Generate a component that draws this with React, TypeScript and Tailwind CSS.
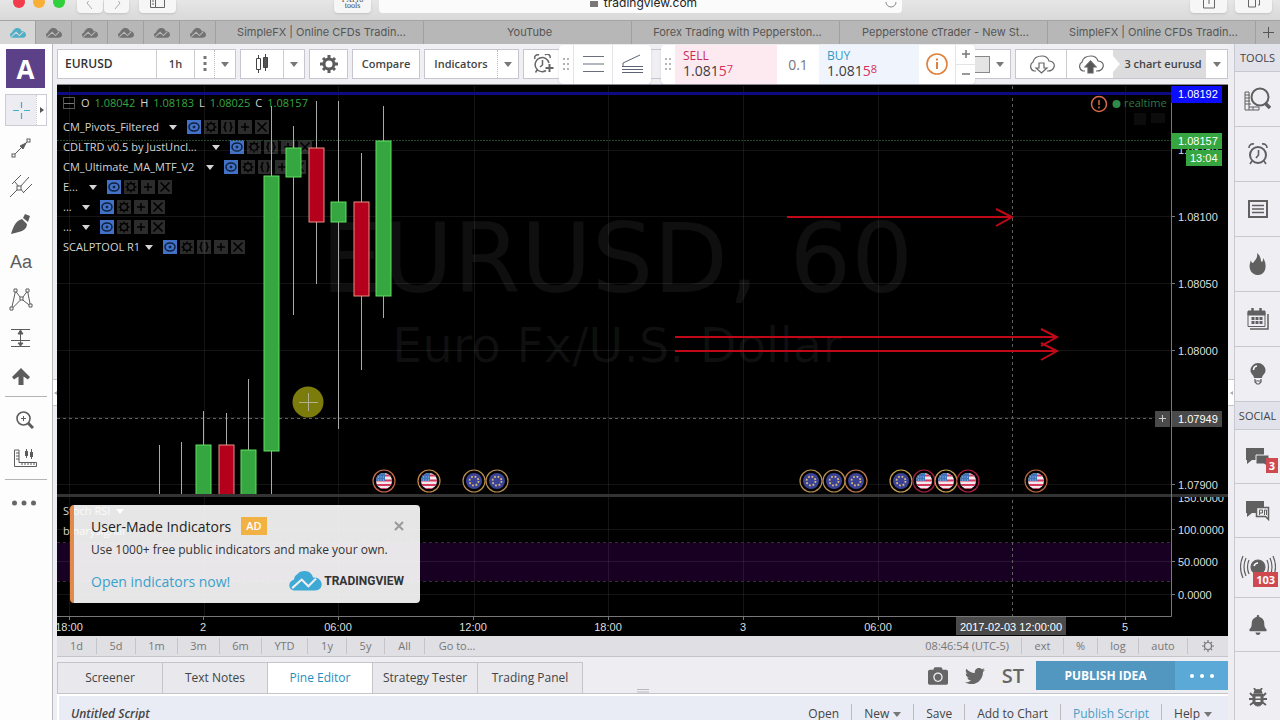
import type { ReactNode } from "react";
import { FaBell, FaCamera, FaTwitter } from "react-icons/fa";

const GREEN = "#36a640";
const RED = "#b4001c";

// cx, wick top, wick bottom, body top, body bottom, up
const candles: [number, number, number, number, number, boolean][] = [
  [203, 411, 495, 445, 495, true],
  [226, 413, 495, 445, 495, false],
  [248, 379, 495, 450, 495, true],
  [271, 106, 495, 176, 451, true],
  [293, 126, 315, 148, 177, true],
  [316, 101, 284, 148, 222, false],
  [338, 101, 429, 202, 222, true],
  [361, 153, 370, 202, 296, false],
  [383, 106, 318, 141, 296, true],
];

const events: [number, "us" | "eu", string][] = [
  [384, "us", "#d06a4a"],
  [429, "us", "#c98a4a"],
  [474, "eu", "#b58d4c"],
  [497, "eu", "#b58d4c"],
  [811, "eu", "#b58d4c"],
  [834, "eu", "#b58d4c"],
  [856, "eu", "#c07a4c"],
  [901, "eu", "#c9a050"],
  [924, "us", "#a52040"],
  [946, "us", "#c9a050"],
  [968, "us", "#b02040"],
  [1036, "us", "#b8683c"],
];

const priceLabels: [string, number][] = [
  ["1.08100", 217],
  ["1.08050", 284],
  ["1.08000", 351],
  ["1.07900", 485],
  ["100.0000", 530],
  ["50.0000", 562],
  ["0.0000", 595],
];

const timeLabels: [string, number][] = [
  ["18:00", 69],
  ["2", 203],
  ["06:00", 338],
  ["12:00", 473],
  ["18:00", 608],
  ["3", 743],
  ["06:00", 878],
  ["5", 1125],
];

const studies = [
  { name: "CM_Pivots_Filtered", width: "w-[103px]", source: true },
  { name: "CDLTRD v0.5 by JustUncl...", width: "w-[146px]", source: true },
  { name: "CM_Ultimate_MA_MTF_V2", width: "w-[140px]", source: true },
  { name: "E...", width: "w-[23px]", source: false },
  { name: "...", width: "w-[16px]", source: false },
  { name: "...", width: "w-[16px]", source: false },
  { name: "SCALPTOOL R1", width: "w-[79px]", source: true },
];

const ranges = [
  { label: "1d", width: "w-10" },
  { label: "5d", width: "w-[39px]" },
  { label: "1m", width: "w-[42px]" },
  { label: "3m", width: "w-[42px]" },
  { label: "6m", width: "w-[42px]" },
  { label: "YTD", width: "w-[46px]" },
  { label: "1y", width: "w-[39px]" },
  { label: "5y", width: "w-[38px]" },
  { label: "All", width: "w-10" },
];

function Caret({ className = "text-[#777]" }: { className?: string }) {
  return (
    <svg width="8" height="5" viewBox="0 0 8 5" className={`shrink-0 ${className}`}>
      <path d="M0 0h8L4 5z" fill="currentColor" />
    </svg>
  );
}

function CloudLogo({ className, line }: { className: string; line: string }) {
  return (
    <svg viewBox="0 0 34 21" className={className}>
      <path
        d="M6 20.500C2 20.500 0 18 0 15c0-3 2-5 5-6 0-3 2-5 4-6 1-2 4-3 7-3 5 0 8 3 9 7 5-1 9 3 9 7 0 4-3 6.500-7 6.500z"
        fill="currentColor"
      />
      <path d="M3 18l10-9 7 7 8-8" fill="none" stroke={line} strokeWidth="2.200" />
    </svg>
  );
}

/* ---------- browser chrome ---------- */

function ChromeButton({ className, label, children }: { className: string; label: string; children: ReactNode }) {
  return (
    <button
      aria-label={label}
      className={`flex h-[13px] shrink-0 items-end justify-center overflow-hidden rounded-b bg-[#f6f6f6] text-[#777] shadow-sm ${className}`}
    >
      {children}
    </button>
  );
}

function BrowserChrome() {
  return (
    <div className="flex h-5 shrink-0 items-start bg-gradient-to-b from-[#e6e6e6] to-[#d9d9d9]">
      <svg width="77" height="10" viewBox="0 0 77 10" className="shrink-0">
        <circle cx="19" cy="2" r="6" fill="#f23c4b" />
        <circle cx="39" cy="2" r="6" fill="#f9ae35" />
        <circle cx="59" cy="2" r="6" fill="#2fd03c" />
      </svg>
      <ChromeButton label="Back" className="w-[26px]">
        <svg width="8" height="12" viewBox="0 0 8 12" fill="none" stroke="#aaa"><path d="M6-4L1 2l5 6" /></svg>
      </ChromeButton>
      <ChromeButton label="Forward" className="ml-px w-[25px]">
        <svg width="8" height="12" viewBox="0 0 8 12" fill="none" stroke="#aaa"><path d="M2-4l5 6-5 6" /></svg>
      </ChromeButton>
      <ChromeButton label="Sidebar" className="ml-2.5 w-[37px]">
        <svg width="15" height="13" viewBox="0 0 15 13" fill="none" stroke="#666">
          <path d="M.5-4v11.500h14V-4M5.500-4V7M2 1h2M2 4h2" />
        </svg>
      </ChromeButton>
      <div className="flex flex-1 justify-center pl-[158px] pr-8">
        <ChromeButton label="FxPro tools" className="w-[37px]">
          <span className="pb-1 text-center font-[Liberation_Serif,serif] text-[8px] leading-[6px] text-[#444]">
            FXPro
            <br />
            tools
          </span>
        </ChromeButton>
        <div className="ml-2 flex h-[13px] flex-1 items-end overflow-hidden rounded-b bg-[#fbfbfb]">
          <div className="flex flex-1 items-end justify-center pl-6">
            <svg width="8" height="12" viewBox="0 0 8 12" className="mr-1.5">
              <path d="M0 0h8v6H0z" fill="#777" />
            </svg>
            <span className="pb-0.5 font-[Inter,sans-serif] text-[12px] leading-4 text-[#222]">tradingview.com</span>
          </div>
          <button aria-label="Reload" className="pr-1">
            <svg width="14" height="13" viewBox="0 0 14 13" fill="none" stroke="#888">
              <path d="M2 2a5 5 0 0 0 10 0" />
            </svg>
          </button>
        </div>
        <div className="w-64 shrink-0" />
      </div>
      <ChromeButton label="Share" className="w-[37px]">
        <svg width="12" height="13" viewBox="0 0 12 13" fill="none" stroke="#666"><path d="M.5-2v10h11V-2M6-2v6" /></svg>
      </ChromeButton>
      <ChromeButton label="Show tabs" className="ml-2 mr-2 w-[37px]">
        <svg width="14" height="13" viewBox="0 0 14 13" fill="none" stroke="#666"><path d="M1.500-2v9h7V-2M11 5h1.500v-7" /></svg>
      </ChromeButton>
    </div>
  );
}

const pages = [
  "SimpleFX | Online CFDs Tradin...",
  "YouTube",
  "Forex Trading with Pepperston...",
  "Pepperstone cTrader - New St...",
  "SimpleFX | Online CFDs Tradin...",
];

function BrowserTabs() {
  return (
    <div className="flex h-6 shrink-0 border-t border-[#a4a4a4] bg-[#b7b7b7] font-[Inter,sans-serif] text-[11px] text-[#555]">
      {[0, 1, 2, 3, 4, 5].map((i) => (
        <button
          key={i}
          aria-label="TradingView tab"
          className={`flex w-9 shrink-0 items-center justify-center border-r border-[#a0a0a0] ${
            i === 0 ? "bg-[#d6d6d6] text-[#4fafc6]" : "text-[#727272]"
          }`}
        >
          <CloudLogo className="h-2.5 w-4" line={i === 0 ? "#d6d6d6" : "#b7b7b7"} />
        </button>
      ))}
      {pages.map((page, i) => (
        <button key={i} className="min-w-0 flex-1 truncate border-r border-[#a0a0a0] pl-1">
          {page}
        </button>
      ))}
      <button aria-label="New tab" className="flex w-6 shrink-0 items-center justify-center">
        <svg width="11" height="11" viewBox="0 0 11 11" stroke="#555"><path d="M5.500 0v11M0 5.500h11" /></svg>
      </button>
    </div>
  );
}

/* ---------- drawing tools ---------- */

function DrawTool({ label, children }: { label: string; children: ReactNode }) {
  return (
    <button aria-label={label} className="flex h-[38px] w-full items-center justify-center pr-2.5 text-[#5c5c5c]">
      {children}
    </button>
  );
}

function LeftToolbar() {
  return (
    <aside className="w-[53px] shrink-0 border-r border-[#b9b9c0] bg-[#fdfdfd] pt-[5px]">
      <button className="mx-1.5 flex h-[39px] w-[39px] items-center justify-center bg-[#5c4189] text-[26px] leading-none font-bold text-white">
        A
      </button>
      <div className="mx-[5px] mt-1.5 mb-[3px] flex h-8 border border-[#ccccd4] bg-[#ececf2]">
        <button aria-label="Cross" className="flex flex-1 items-center justify-center">
          <svg width="17" height="17" viewBox="0 0 17 17" stroke="#3db4c6" strokeWidth="1.200">
            <path d="M8.500 0v6M8.500 11v6M0 8.500h6M11 8.500h6" />
          </svg>
        </button>
        <button aria-label="Cursors" className="flex w-[10px] items-center justify-center border-l border-dotted border-[#ccc] bg-white">
          <svg width="4" height="6" viewBox="0 0 4 6"><path d="M0 0l4 3-4 3z" fill="#555" /></svg>
        </button>
      </div>
      <DrawTool label="Trend line">
        <svg width="20" height="20" viewBox="0 0 20 20" fill="none" stroke="currentColor">
          <rect x="1" y="16" width="3" height="3" /><rect x="16" y="1" width="3" height="3" />
          <path d="M4 16L16 4" /><path d="M9 8l6-3-3 6z" fill="currentColor" />
        </svg>
      </DrawTool>
      <DrawTool label="Pitchfork">
        <svg width="22" height="22" viewBox="0 0 22 22" fill="none" stroke="currentColor">
          <path d="M0 22l8-8M10 12L19 2M2 9l9-9M13 18l9-9M5 7l9 11" /><rect x="7" y="11" width="4" height="4" fill="white" />
        </svg>
      </DrawTool>
      <DrawTool label="Brush">
        <svg width="20" height="20" viewBox="0 0 20 20" fill="currentColor">
          <path d="M0 20C2 14 4 7 11 5l5 5c0 7-8 8-16 10zM12 4l2-4 5 2-2 6z" />
        </svg>
      </DrawTool>
      <DrawTool label="Text">
        <span className="font-[Liberation_Sans,sans-serif] text-lg">Aa</span>
      </DrawTool>
      <DrawTool label="Pattern">
        <svg width="24" height="24" viewBox="0 0 24 24" fill="none" stroke="currentColor">
          <path d="M2.500 21l4-18 6 8 6-8 3 15-9-7-10 10" />
          <g fill="white"><path d="M1 19h3v3H1zM5 1h3v3H5zM11 9h3v3h-3zM17 1h3v3h-3zM20 16h3v3h-3z" /></g>
        </svg>
      </DrawTool>
      <DrawTool label="Prediction">
        <svg width="20" height="20" viewBox="0 0 20 20" fill="none" stroke="currentColor">
          <path d="M0 1.500h19M0 12.500h19M0 18.500h19M9.500 3v14" /><path d="M7 6l2.500-4L12 6zM7 15l2.500 3 2.500-3z" fill="currentColor" />
        </svg>
      </DrawTool>
      <DrawTool label="Arrow">
        <svg width="18" height="17" viewBox="0 0 18 17" fill="currentColor">
          <path d="M9 0l9 9-2 2.500-4.500-3V17h-5V8.500L2 11.500 0 9z" />
        </svg>
      </DrawTool>
      <hr className="mx-[5px] mt-px mb-1 border-[#b4b4b8]" />
      <div className="pl-2">
        <DrawTool label="Zoom in">
          <svg width="18" height="18" viewBox="0 0 18 18" fill="none" stroke="currentColor">
            <circle cx="7.500" cy="7.500" r="6.500" strokeWidth="1.600" /><path d="M7.500 5v5M5 7.500h5" /><path d="M12 12l5 5" strokeWidth="3" />
          </svg>
        </DrawTool>
        <DrawTool label="Measure">
          <svg width="23" height="18" viewBox="0 0 23 18" fill="none" stroke="currentColor">
            <path d="M.5 1v16.500h22v-4H5V1zM2 4h3M2 7h3M2 10h3M8 13v3M11 13v3M14 13v3M17 13v3M20 13v3" />
            <path d="M12.500 0v9M17.500 0v10" /><path d="M11 2h3v5h-3zM16 3h3v5h-3z" fill="currentColor" stroke="none" />
          </svg>
        </DrawTool>
      </div>
      <hr className="mx-[5px] mt-0.5 mb-1 border-[#b4b4b8]" />
      <button aria-label="More" className="flex h-[38px] w-full items-center justify-center pr-1">
        <svg width="24" height="6" viewBox="0 0 24 6" fill="#666">
          <circle cx="2.500" cy="3" r="2.500" /><circle cx="12" cy="3" r="2.500" /><circle cx="21.500" cy="3" r="2.500" />
        </svg>
      </button>
    </aside>
  );
}

/* ---------- top toolbar ---------- */

function Group({ className = "", children }: { className?: string; children: ReactNode }) {
  return (
    <div className={`flex h-[30px] shrink-0 border border-[#c6c6ce] bg-white ${className}`}>{children}</div>
  );
}

function Cell({ label, className = "", children }: { label?: string; className?: string; children: ReactNode }) {
  return (
    <button aria-label={label} className={`flex items-center justify-center ${className}`}>
      {children}
    </button>
  );
}

function Grip() {
  return (
    <svg width="14" height="14" viewBox="0 0 14 14" fill="#b4b4b8" className="shrink-0 self-center">
      {[1, 6, 11].map((y) => (
        <path key={y} d={`M4 ${y}h2v2h-2zM8 ${y}h2v2h-2z`} />
      ))}
    </svg>
  );
}

function Toolbar() {
  return (
    <div className="flex h-10 shrink-0 items-center bg-[#f0f0f4] text-[11px] font-semibold text-[#444]">
      <Group>
        <input
          aria-label="Symbol"
          defaultValue="EURUSD"
          className="w-[98px] pl-[7px] text-[12px] font-semibold text-[#333] outline-none"
        />
        <Cell className="w-[38px] border-l border-[#ccc]">1h</Cell>
        <Cell label="Intervals" className="w-5 border-l border-[#ccc]">
          <svg width="4" height="16" viewBox="0 0 4 16" fill="#777">
            <path d="M.5 0h3v3h-3zM.5 6h3v3h-3zM.5 12h3v3h-3z" />
          </svg>
        </Cell>
        <Cell label="Interval menu" className="w-[21px] border-l border-dotted border-[#bbb]"><Caret /></Cell>
      </Group>
      <Group className="ml-1">
        <Cell label="Chart style" className="w-[42px]">
          <svg width="14" height="20" viewBox="0 0 14 20" fill="none" stroke="#444">
            <path d="M3.500 1v3M3.500 16v3M10.500 0v17" /><path d="M1.500 4.500h4v11h-4z" /><path d="M8.500 3.500h4v10h-4z" fill="#555" />
          </svg>
        </Cell>
        <Cell label="Chart style menu" className="w-[21px] border-l border-[#ccc]"><Caret /></Cell>
      </Group>
      <Group className="ml-1">
        <Cell label="Settings" className="w-[37px]">
          <svg width="18" height="18" viewBox="0 0 18 18" fill="none" stroke="#5c5c5c">
            <circle cx="9" cy="9" r="5" strokeWidth="3" />
            <path d="M9 0v3M9 15v3M0 9h3M15 9h3M3 3l2 2M13 13l2 2M15 3l-2 2M5 13l-2 2" strokeWidth="3" />
          </svg>
        </Cell>
      </Group>
      <Group className="ml-1">
        <Cell className="w-[66px]">Compare</Cell>
      </Group>
      <Group className="ml-1">
        <Cell className="w-[72px]">Indicators</Cell>
        <Cell label="Indicator templates" className="w-[21px] border-l border-dotted border-[#bbb]"><Caret /></Cell>
      </Group>
      <Group className="ml-1 border-r-0">
        <Cell label="Create alert" className="w-[35px] pl-1">
          <svg width="22" height="20" viewBox="0 0 22 20" fill="none" stroke="#666" strokeWidth="1.500">
            <path d="M13 16.500A7 7 0 1 1 16 9M9.500 6v5L7 13M2 5a3 3 0 0 1 4-4M12 1a3 3 0 0 1 5 3M4 16l-1.500 2.500" />
            <path d="M16.500 10v8M12.500 14h8" strokeWidth="2" />
          </svg>
        </Cell>
      </Group>

      <div className="flex h-[39px] shrink-0 rounded-sm bg-white shadow">
        <Grip />
        <Cell label="Line tool" className="w-[39px] border-l border-[#e4e4e8]">
          <svg width="21" height="16" viewBox="0 0 21 16" stroke="#6a6f7c"><path d="M0 .5h21M0 8h21M0 15.500h21" /></svg>
        </Cell>
        <Cell label="Fan tool" className="w-[39px] border-l border-[#e4e4e8]">
          <svg width="21" height="20" viewBox="0 0 21 20" fill="none" stroke="#5c6476">
            <path d="M1 12V9L18 1M0 12.500h21M0 15.500h21M0 18.500h21" />
          </svg>
        </Cell>
      </div>
      <div className="h-[30px] w-2.5 shrink-0 border-y border-[#c6c6ce]" />
      <div className="flex h-[39px] shrink-0 rounded-sm bg-white font-normal shadow">
        <Grip />
        <button className="w-[102px] bg-[#fdeaf1] pl-2 text-left text-[#3c3c44]">
          <span className="block text-[12px] leading-[14px] text-[#c92a5c]">SELL</span>
          <span className="flex text-[14px] leading-4">
            1.081<span className="text-[#d8305c]">5</span>
            <span className="text-[11px] leading-3 text-[#d8305c]">7</span>
          </span>
        </button>
        <input aria-label="Lots" defaultValue="0.1" className="w-[42px] text-center text-[14px] text-[#777] outline-none" />
        <button className="w-[100px] bg-[#f0f5fd] pl-2 text-left text-[#3c3c44]">
          <span className="block text-[12px] leading-[14px] text-[#2f9cc9]">BUY</span>
          <span className="flex text-[14px] leading-4">
            1.081<span className="text-[#d8305c]">5</span>
            <span className="text-[11px] leading-3 text-[#d8305c]">8</span>
          </span>
        </button>
        <Cell label="Info" className="w-9">
          <svg width="22" height="22" viewBox="0 0 22 22" fill="none" stroke="#e0803c" strokeWidth="1.600">
            <circle cx="11" cy="11" r="10" /><path d="M11 9v7M11 5.500v2" strokeWidth="2" />
          </svg>
        </Cell>
        <div className="flex w-5 flex-col border-l border-[#e4e4e8]">
          <Cell label="More lots" className="flex-1 border-b border-[#e4e4e8]">
            <svg width="8" height="8" viewBox="0 0 8 8" stroke="#777" strokeWidth="1.500"><path d="M4 0v8M0 4h8" /></svg>
          </Cell>
          <Cell label="Fewer lots" className="flex-1">
            <svg width="8" height="8" viewBox="0 0 8 8" stroke="#777" strokeWidth="1.500"><path d="M0 4h8" /></svg>
          </Cell>
        </div>
      </div>
      <Group className="border-l-0">
        <Cell label="Layout" className="w-[15px]"><span className="h-[17px] w-full border border-l-0 border-[#888] bg-[#e4e4e4]" /></Cell>
        <Cell label="Layout menu" className="w-5"><Caret /></Cell>
      </Group>

      <Group className="ml-auto">
        <Cell label="Load layout" className="w-[50px]">
          <svg width="27" height="19" viewBox="0 0 27 19" fill="none" stroke="#666" strokeWidth="1.200">
            <path d="M8 16H6a5 5 0 0 1-1-9c1-4 5-6 9-6s6 2 7 5c4 0 6 3 5 6-1 3-3 4-6 4h-1" />
            <path d="M11 8h5v5h3l-5.500 5L8 13h3z" />
          </svg>
        </Cell>
        <Cell label="Save layout" className="w-[47px] border-l border-[#ccc]">
          <svg width="27" height="19" viewBox="0 0 27 19" fill="none" stroke="#666" strokeWidth="1.200">
            <path d="M8 16H6a5 5 0 0 1-1-9c1-4 5-6 9-6s6 2 7 5c4 0 6 3 5 6-1 3-3 4-6 4h-1" />
            <path d="M11 18h5v-6h3l-5.500-6L8 12h3z" fill="#555" />
          </svg>
        </Cell>
        <button className="flex w-[93px] items-center bg-[#dcdcde] text-[#444]">
          <svg width="7" height="16" viewBox="0 0 7 16"><path d="M0 0l7 8-7 8z" fill="white" /></svg>
          <span className="flex-1 text-center">3 chart eurusd</span>
        </button>
        <Cell label="Layout list" className="w-[21px]"><Caret /></Cell>
      </Group>
    </div>
  );
}

/* ---------- chart ---------- */

function EventFlag({ x, kind, ring }: { x: number; kind: "us" | "eu"; ring: string }) {
  return (
    <g transform={`translate(${x} 481)`}>
      <circle r="11" fill="black" stroke={ring} strokeWidth="1.200" />
      {kind === "eu" ? (
        <>
          <circle r="8" fill="#3a4296" />
          <circle r="4.500" fill="none" stroke="#d8b878" strokeWidth="1.800" strokeDasharray="1.800 1.734" />
        </>
      ) : (
        <g clipPath="url(#flag)">
          <rect x="-8" y="-8" width="16" height="16" fill="#f3e8ee" />
          <path d="M-8-5.500H8M-8-.5H8M-8 4H8M-8 8H8" stroke="#d23a5e" strokeWidth="2.200" />
          <rect x="-8" y="-8" width="9" height="8" fill="#3f74b8" />
          <path d="M-6-4H1M-6-1H1" stroke="#a9c6e8" strokeDasharray="1 1.500" />
        </g>
      )}
    </g>
  );
}

function Arrow({ x1, x2, y }: { x1: number; x2: number; y: number }) {
  return (
    <path d={`M${x1} ${y}H${x2}M${x2 - 16} ${y - 8}L${x2} ${y}L${x2 - 16} ${y + 9}`} />
  );
}

// Drawn above the legend, so candles cover the study buttons.
function ChartCanvas() {
  return (
    <svg
      viewBox="57 85 1171 551"
      className="pointer-events-none relative block w-full font-[Liberation_Sans,sans-serif]"
      fontSize="11"
      fill="#dedede"
    >
      <clipPath id="flag"><circle r="8" /></clipPath>
      <g fill="white" fillOpacity="0.06" className="font-[DejaVu_Sans,sans-serif]" textAnchor="middle">
        <text x="617" y="292" fontSize="97">EURUSD, 60</text>
        <text x="617" y="362" fontSize="48">Euro Fx/U.S. Dollar</text>
      </g>
      <rect x="57" y="543" width="1114" height="38" fill="#180022" />
      <g stroke="white" strokeOpacity="0.08">
        {[69, 204, 338, 474, 608, 743, 878, 1125].map((x) => (
          <path key={x} d={`M${x}.5 86V616`} />
        ))}
        {[150, 216, 283, 350, 417, 484, 529, 561, 594].map((y) => (
          <path key={y} d={`M57 ${y}.5H1171`} />
        ))}
      </g>
      <g strokeDasharray="3 3">
        <path d="M57 542.500H1171M57 581.500H1171" stroke="#3d2a48" />
        <path d="M57 140.500H1171" stroke="#24482a" strokeDasharray="2 1" />
        <path d="M57 418.500H1171M1012.500 86V616" stroke="#606060" />
      </g>
      <path d="M57 93.500H1171" stroke="#0c0c80" strokeWidth="3" />

      <path d="M159.500 445V495M181.500 442V495" stroke="#aaa" />
      {candles.map(([x, high, low, top, bottom, up]) => (
        <g key={x}>
          <path d={`M${x}.5 ${high}V${low}`} stroke="#aaa" />
          <rect
            x={x - 7}
            y={top}
            width="15"
            height={bottom - top}
            fill={up ? GREEN : RED}
            stroke={up ? "#5ee060" : "#e89080"}
          />
        </g>
      ))}

      <g fill="none" stroke="#c00818" strokeWidth="2">
        <Arrow x1={787} x2={1012} y={217} />
        <Arrow x1={675} x2={1057} y={337} />
        <Arrow x1={675} x2={1057} y={351} />
      </g>
      {events.map(([x, kind, ring]) => (
        <EventFlag key={x} x={x} kind={kind} ring={ring} />
      ))}
      <circle cx="308" cy="402" r="15.500" fill="#7c7c0c" />
      <path d="M308.500 393v18M299 402.500h19" stroke="#b0b090" />

      <path d="M57 495.500H1228" stroke="#333" strokeWidth="3" />
      <path d="M1171.500 86V616.500M57 616.500H1171.500" stroke="#777" fill="none" />

      {priceLabels.map(([label, y]) => (
        <g key={label}>
          <path d={`M1171 ${y - 1}.5h4`} stroke="#777" />
          <text x="1178" y={y + 4}>{label}</text>
        </g>
      ))}
      <svg x="1171" y="497" width="57" height="10" viewBox="1171 497 57 10">
        <text x="1178" y="502">150.0000</text>
      </svg>
      {timeLabels.map(([label, x]) => (
        <g key={x}>
          <path d={`M${x}.5 617v3`} stroke="#777" />
          <text x={x} y="631" textAnchor="middle">{label}</text>
        </g>
      ))}
      <text x="1178" y="154">1.08150</text>

      <g fill="white">
        <rect x="1171" y="86" width="51" height="17" fill="#0c0cff" />
        <text x="1178" y="98">1.08192</text>
        <rect x="1171" y="133" width="51" height="16" fill={GREEN} />
        <text x="1178" y="145">1.08157</text>
        <rect x="1186" y="150" width="36" height="16" fill={GREEN} />
        <text x="1190" y="162">13:04</text>
        <rect x="1155" y="411" width="15" height="16" fill="#4a4a4a" />
        <path d="M1162.500 415v7M1159 418.500h7" stroke="#ccc" />
        <rect x="1172" y="411" width="50" height="16" fill="#4a4a4a" />
        <text x="1178" y="423">1.07949</text>
        <rect x="956" y="617" width="110" height="18" fill="#4a4a4a" />
        <text x="1011" y="631" textAnchor="middle">2017-02-03 12:00:00</text>
      </g>

      <circle cx="1099" cy="104" r="7.500" fill="none" stroke="#d86a4a" strokeWidth="1.500" />
      <path d="M1099 100v5M1099 106.500v2" stroke="#d86a4a" strokeWidth="1.500" />
      <circle cx="1116.500" cy="104" r="4" fill="#2e8a4c" />
      <text x="1124" y="107" fill="#2e7a44" className="font-[Open_Sans,sans-serif]">realtime</text>
      <path d="M1134 113h12v12h-12zM1151 113h14v10h-14z" fill="#0c0c0c" />
    </svg>
  );
}

const studyIcons = {
  settings: "M7 3.500a3.500 3.500 0 1 0 0 7 3.500 3.500 0 1 0 0-7M7 1.500v2M7 10.500v2M1.500 7h2M10.500 7h2M3 3l1.500 1.500M9.500 9.500L11 11M11 3L9.500 4.500M4.500 9.500L3 11",
  source: "M5.500 2.500Q4 2.500 4 5T2.500 7Q4 7 4 9t1.500 2.500M8.500 2.500Q10 2.500 10 5t1.500 2Q10 7 10 9t-1.500 2.500",
  add: "M7 3v8M3 7h8",
  remove: "M2.500 2.500l9 9M11.500 2.500l-9 9",
};

function StudyButton({ label, d }: { label: string; d: string }) {
  return (
    <button aria-label={label} className="h-3.5 w-3.5 bg-[#2c2c2c]">
      <svg width="14" height="14" viewBox="0 0 14 14" fill="none" stroke="black" strokeWidth="1.500"><path d={d} /></svg>
    </button>
  );
}

function Legend() {
  return (
    <div className="absolute top-2 left-1.5 text-[11px] font-medium text-[#d4d4d4]">
      <div className="flex h-5 items-center gap-1.5 text-[#36a640]">
        <button aria-label="Collapse legend" className="flex h-3 w-3 items-center border border-[#555]">
          <span className="h-px w-full bg-[#777]" />
        </button>
        <span className="flex gap-[5px]">
          <b className="font-medium text-[#d4d4d4]">O</b> 1.08042
          <b className="font-medium text-[#d4d4d4]">H</b> 1.08183
          <b className="font-medium text-[#d4d4d4]">L</b> 1.08025
          <b className="font-medium text-[#d4d4d4]">C</b> 1.08157
        </span>
      </div>
      <div className="mt-1">
        {studies.map((study, i) => (
          <div key={i} className="flex h-5 items-center">
            <span className={`whitespace-nowrap ${study.width}`}>{study.name}</span>
            <button aria-label="Study menu" className="ml-[3px]"><Caret className="text-[#d4d4d4]" /></button>
            <div className="ml-2.5 flex gap-[3px]">
              <button aria-label="Show or hide" className="h-3.5 w-3.5 bg-[#4272c8]">
                <svg width="14" height="14" viewBox="0 0 14 14" fill="none" stroke="#10203c">
                  <ellipse cx="7" cy="7" rx="5" ry="4" strokeWidth="1.500" /><circle cx="7" cy="7" r="1" fill="#10203c" />
                </svg>
              </button>
              <StudyButton label="Format" d={studyIcons.settings} />
              {study.source && <StudyButton label="Source code" d={studyIcons.source} />}
              <StudyButton label="Add" d={studyIcons.add} />
              <StudyButton label="Remove" d={studyIcons.remove} />
            </div>
          </div>
        ))}
      </div>
    </div>
  );
}

function AdCard() {
  return (
    <div className="absolute bottom-[33px] left-[13px] w-[350px] rounded-sm border-l-4 border-[#e08a4c] bg-white/90 pt-3 pr-4 pb-2.5 pl-[17px] text-[#333]">
      <div className="flex h-[18px] items-center">
        <h2 className="text-[14px] font-medium text-[#222]">User-Made Indicators</h2>
        <span className="ml-2.5 bg-[#f2b243] px-[5px] text-[11px] leading-[18px] font-semibold text-white">AD</span>
        <button aria-label="Close" className="ml-auto">
          <svg width="10" height="10" viewBox="0 0 10 10" stroke="#999" strokeWidth="2"><path d="M1 1l8 8M9 1L1 9" /></svg>
        </button>
      </div>
      <p className="mt-1.5 text-[12px] leading-[18px] font-medium whitespace-nowrap">Use 1000+ free public indicators and make your own.</p>
      <div className="mt-2.5 flex h-6 items-center justify-between">
        <a href="#indicators" className="text-[14px] text-[#3aa0cc]">Open indicators now!</a>
        <span className="flex items-center gap-0.5">
          <CloudLogo className="h-5 w-[33px] text-[#3fa9d6]" line="#f0f0f0" />
          <b className="font-['Liberation_Sans_Narrow',Roboto,sans-serif] text-[12px] font-bold text-[#333]">TRADINGVIEW</b>
        </span>
      </div>
    </div>
  );
}

function Chart() {
  return (
    <div className="relative shrink-0 overflow-hidden border-t border-[#8a8a90] bg-black">
      <Legend />
      <ChartCanvas />
      <div className="absolute bottom-[95px] left-1.5 text-[11px] leading-5 text-[#d4d4d4]">
        <div className="flex items-center gap-1.5">Stoch RSI <Caret className="text-white" /></div>
        <div>binarysignal</div>
      </div>
      <AdCard />
    </div>
  );
}

function RangeBar() {
  const cell = "h-4 border-r border-[#c4c4ca] text-center";
  return (
    <div className="flex h-[21px] shrink-0 items-center border-b border-[#c4c4ca] bg-[#dfdfe4] text-[11px] leading-4 font-medium text-[#777]">
      {ranges.map((r) => (
        <button key={r.label} className={`${cell} ${r.width}`}>{r.label}</button>
      ))}
      <button className="w-16">Go to...</button>
      <span className="ml-auto pr-3">08:46:54 (UTC-5)</span>
      <button className={`${cell} w-[43px] border-l`}>ext</button>
      <button className={`${cell} w-[34px]`}>%</button>
      <button className={`${cell} w-[41px]`}>log</button>
      <button className={`${cell} w-[49px]`}>auto</button>
      <button aria-label="Axis settings" className="flex w-10 justify-center">
        <svg width="12" height="12" viewBox="0 0 12 12" fill="none" stroke="#777" strokeWidth="1.200">
          <circle cx="6" cy="6" r="3.500" />
          <path d="M6 0v2M6 10v2M0 6h2M10 6h2M2 2l1 1M9 9l1 1M10 2L9 3M3 9l-1 1" />
        </svg>
      </button>
    </div>
  );
}

function BottomPanel() {
  return (
    <>
      <div className="flex shrink-0 items-end border-b border-[#c4c4ca] pt-1">
        <div className="flex border-t border-l border-[#c4c4ca] text-[12px]">
          {["Screener", "Text Notes", "Pine Editor", "Strategy Tester", "Trading Panel"].map((tab) => (
            <button
              key={tab}
              className={`h-[30px] w-[105px] border-r border-[#c4c4ca] ${
                tab === "Pine Editor" ? "bg-white text-[#1f8fbf]" : "bg-[#e8e8ed] text-[#444]"
              }`}
            >
              {tab}
            </button>
          ))}
        </div>
        <svg width="12" height="4" viewBox="0 0 12 4" className="ml-[54px]" stroke="#bbb"><path d="M0 .5h12M0 3h12" /></svg>
        <div className="ml-auto flex items-center pb-[3px]">
          <button aria-label="Snapshot"><FaCamera className="h-5 w-5 text-[#666]" /></button>
          <button aria-label="Tweet" className="ml-[17px]"><FaTwitter className="h-5 w-5 text-[#666]" /></button>
          <button className="ml-[17px] text-xl leading-7 font-semibold text-[#666]">ST</button>
          <button className="ml-3 h-[29px] w-[139px] bg-[#5297c0] text-[12px] font-bold text-white">PUBLISH IDEA</button>
          <button aria-label="More publish options" className="flex h-[29px] w-[53px] items-center justify-center bg-[#5aa9d6]">
            <svg width="26" height="4" viewBox="0 0 26 4" fill="white">
              <circle cx="3" cy="2" r="2" /><circle cx="13" cy="2" r="2" /><circle cx="23" cy="2" r="2" />
            </svg>
          </button>
        </div>
      </div>
      <div className="flex flex-1 items-start border-t-2 border-l-2 border-white bg-[#e9ecf5] pt-2 text-[12px] leading-5 text-[#444]">
        <h3 className="ml-3 font-semibold italic">Untitled Script</h3>
        <div className="ml-auto flex divide-x divide-[#bbb]">
          <button className="px-3">Open</button>
          <button className="flex items-center gap-1 px-3">New <Caret /></button>
          <button className="px-3">Save</button>
          <button className="px-3">Add to Chart</button>
          <button className="px-3 text-[#4a9cc4]">Publish Script</button>
          <button className="flex items-center gap-1 pr-4 pl-3">Help <Caret /></button>
        </div>
      </div>
    </>
  );
}

/* ---------- right sidebar ---------- */

function SideHeader({ children }: { children: ReactNode }) {
  return (
    <div className="h-7 border-b border-[#c8c8d0] bg-[#e2e2ea] text-center text-[11px] leading-7 font-medium text-[#444]">
      {children}
    </div>
  );
}

function SideTool({ label, badge, className = "h-[55px]", children }: { label: string; badge?: string; className?: string; children: ReactNode }) {
  return (
    <button
      aria-label={label}
      className={`relative flex w-full items-center justify-center border-b border-[#c8c8d0] text-[#606060] ${className}`}
    >
      {children}
      {badge && (
        <span className="absolute right-0.5 bottom-2.5 bg-[#cf4a4e] px-[3px] text-[11px] leading-[15px] font-bold text-white">
          {badge}
        </span>
      )}
    </button>
  );
}

function RightSidebar() {
  return (
    <aside className="w-[46px] shrink-0 border-l border-[#c8c8d0] bg-[#eeeef3]">
      <SideHeader>TOOLS</SideHeader>
      <SideTool label="Data window">
        <svg width="27" height="24" viewBox="0 0 27 24" fill="none" stroke="currentColor">
          <path d="M1 5h4v15h10v3H1zM1 8h5M1 11h5M1 14h5M1 17h6M5 20v3M9 20v3" />
          <circle cx="16" cy="10" r="8.500" strokeWidth="2" /><path d="M21 16l5 5" strokeWidth="3.500" />
        </svg>
      </SideTool>
      <SideTool label="Alerts">
        <svg width="20" height="22" viewBox="0 0 20 22" fill="none" stroke="currentColor" strokeWidth="2">
          <circle cx="10" cy="12" r="8" /><path d="M10.500 7v5L8 15M1 5a4 4 0 0 1 5-4M14 1a4 4 0 0 1 5 4M4 18l-2 3M16 18l2 3" strokeWidth="1.600" />
        </svg>
      </SideTool>
      <SideTool label="Watch list">
        <svg width="20" height="18" viewBox="0 0 20 18" fill="none" stroke="currentColor" strokeWidth="2">
          <path d="M1 1h18v16H1z" /><path d="M4 5.500h12M4 9h12M4 12.500h12" strokeWidth="1.500" />
        </svg>
      </SideTool>
      <SideTool label="Hot lists">
        <svg width="18" height="22" viewBox="-1 0 18 22" fill="currentColor">
          <path d="M7 0c5 4 3 8 5 9 1-1 1-2 1-4 3 4 3 9 2 12-1 3-4 5-7 5s-7-2-8-6c-1-3 0-6 1-9 0 2 1 3 2 3 2-3 5-5 4-10z" />
        </svg>
      </SideTool>
      <SideTool label="Calendar">
        <svg width="22" height="22" viewBox="0 0 22 22" fill="none" stroke="currentColor">
          <path d="M1 4.500h17v14H1z" /><path d="M1 3h17v4H1z" fill="currentColor" />
          <path d="M5.500 0v4M13.500 0v4" strokeWidth="2.500" />
          <path d="M4.500 10.500h11M4.500 14.500h11" strokeWidth="3" strokeDasharray="3 1" /><path d="M21 6v15H3" strokeWidth="1.500" />
        </svg>
      </SideTool>
      <SideTool label="My ideas">
        <svg width="16" height="22" viewBox="0 0 16 22" fill="currentColor">
          <path d="M8 0a7.500 7.500 0 0 1 7.500 7.500C15.500 11 12 12 12 15H4c0-3-3.500-4-3.500-7.500A7.500 7.500 0 0 1 8 0z" />
          <path d="M3.500 7q0-3.500 3.500-4" fill="none" stroke="white" strokeWidth="1.500" />
          <path d="M5 16v3l2 2h2l2-2v-3M5 18h6" fill="none" stroke="currentColor" strokeWidth="1.200" />
        </svg>
      </SideTool>
      <SideHeader>SOCIAL</SideHeader>
      <SideTool label="Public chats" badge="3" className="h-[54px]">
        <svg width="24" height="18" viewBox="0 0 24 18" fill="currentColor">
          <path d="M0 0h18v12H6l-5 4v-4H0z" /><path d="M10 7h13v9l-2 2-3-2h-8z" stroke="#eeeef3" />
        </svg>
      </SideTool>
      <SideTool label="Private chats" className="h-[54px]">
        <svg width="24" height="20" viewBox="0 0 24 20" fill="currentColor">
          <path d="M0 0h18v12H6l-5 4v-4H0z" />
          <path d="M10.500 6.500h12v12l-3-3h-9z" fill="#eeeef3" stroke="currentColor" strokeWidth="1.500" />
          <path d="M13.500 14V9h3v3h-3M18.500 9v5M18.500 9h2v5" fill="none" stroke="currentColor" />
        </svg>
      </SideTool>
      <SideTool label="Ideas stream" badge="103" className="h-[60px]">
        <svg width="36" height="26" viewBox="0 0 36 26" fill="none" stroke="currentColor" strokeWidth="1.200">
          <circle cx="18" cy="12" r="7" fill="currentColor" /><path d="M14 11q1-3 4-3" stroke="white" strokeWidth="1.500" />
          <path d="M9 5q-3 7 0 14M6 3q-4 9 0 18M3 1q-5 11 0 22M27 5q3 7 0 14M30 3q4 9 0 18M33 1q5 11 0 22" />
        </svg>
      </SideTool>
      <SideTool label="Notifications" className="h-[54px]"><FaBell className="h-5 w-[18px]" /></SideTool>
      <button aria-label="Report a bug" className="mt-9 flex w-full justify-center text-[#606060]">
        <svg width="18" height="19" viewBox="0 0 18 19" fill="none" stroke="currentColor">
          <path d="M5 5a4 3.500 0 0 1 8 0zM4 6h10v7a5 5 0 0 1-10 0z" fill="currentColor" />
          <path d="M5 0l2 3M13 0l-2 3M1 5l3 3M17 5l-3 3M0 11h4M14 11h4M1 17l4-3M17 17l-4-3" strokeWidth="1.800" />
          <path d="M6.500 9.500h5M6.500 13h5" stroke="#eeeef3" strokeWidth="1.800" />
        </svg>
      </button>
    </aside>
  );
}

export default function App() {
  return (
    <div className="flex h-screen flex-col overflow-hidden bg-[#ededf2] font-[Open_Sans,sans-serif]">
      <BrowserChrome />
      <BrowserTabs />
      <div className="flex min-h-0 flex-1">
        <LeftToolbar />
        <button aria-label="Toggle drawing tools" className="mt-[335px] flex h-[27px] w-1 shrink-0 items-center justify-center border-y border-[#c4c4ca] bg-white">
          <svg width="3" height="4" viewBox="0 0 3 4"><path d="M3 0v4L0 2z" fill="#aaa" /></svg>
        </button>
        <main className="flex min-w-0 flex-1 flex-col">
          <Toolbar />
          <Chart />
          <RangeBar />
          <BottomPanel />
        </main>
        <button aria-label="Toggle side panel" className="mt-[335px] flex h-[27px] w-1.5 shrink-0 items-center justify-center border-y border-[#c4c4ca] bg-white">
          <svg width="3" height="4" viewBox="0 0 3 4"><path d="M3 0v4L0 2z" fill="#aaa" /></svg>
        </button>
        <RightSidebar />
      </div>
    </div>
  );
}
